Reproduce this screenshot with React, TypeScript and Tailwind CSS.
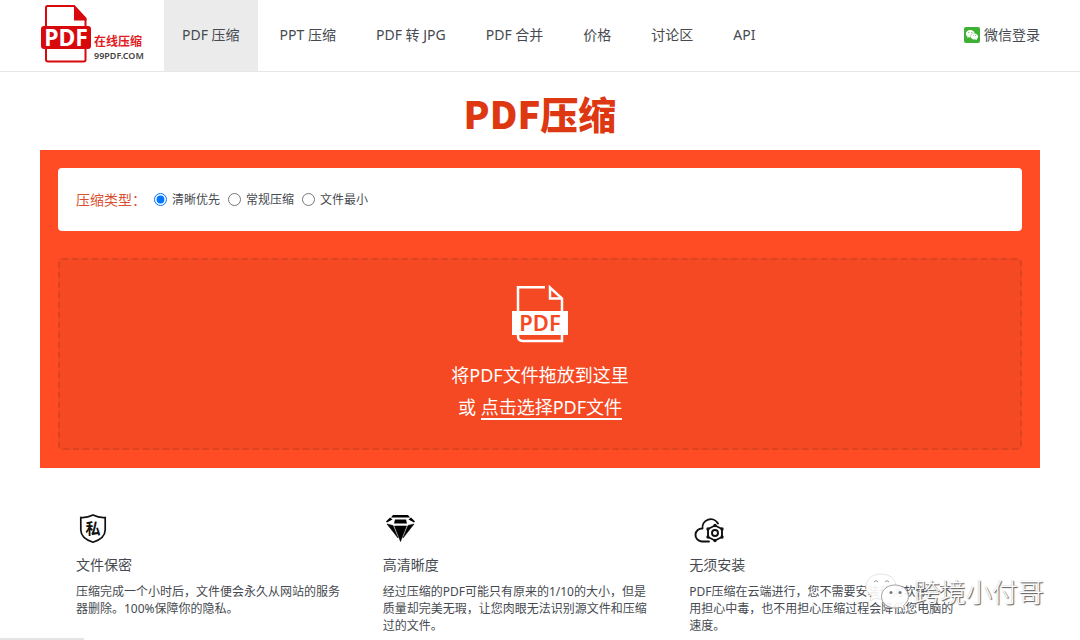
import { useState } from "react";
import { AiFillWechat } from "react-icons/ai";

const navItems = [
  "PDF 压缩",
  "PPT 压缩",
  "PDF 转 JPG",
  "PDF 合并",
  "价格",
  "讨论区",
  "API",
];

const compressTypes = ["清晰优先", "常规压缩", "文件最小"];

const features = [
  {
    title: "文件保密",
    text: "压缩完成一个小时后，文件便会永久从网站的服务器删除。100%保障你的隐私。",
    icon: <ShieldIcon />,
  },
  {
    title: "高清晰度",
    text: "经过压缩的PDF可能只有原来的1/10的大小，但是质量却完美无瑕，让您肉眼无法识别源文件和压缩过的文件。",
    icon: <DiamondIcon />,
  },
  {
    title: "无须安装",
    text: "PDF压缩在云端进行，您不需要安装任何软件，不用担心中毒，也不用担心压缩过程会降低您电脑的速度。",
    icon: <CloudIcon />,
  },
];

function LogoIcon() {
  return (
    <svg width="52" height="60" viewBox="0 0 52 60" aria-hidden="true">
      <path
        d="M6 22V3.500Q6 2 7.500 2H34L45.500 14.500V56Q45.500 57.500 43.500 57.500H8Q6 57.500 6 55.500V22Z"
        fill="#fff"
        stroke="#d8090d"
        strokeWidth="2"
      />
      <path d="M34 1L46.500 15V16.500H34Z" fill="#d8090d" />
      <rect x="1" y="22" width="50" height="23" rx="3" fill="#d8090d" />
      <text
        x="26"
        y="42"
        textAnchor="middle"
        fill="#fff"
        fontSize="23"
        fontWeight="700"
        fontFamily="Noto Sans, sans-serif"
      >
        PDF
      </text>
    </svg>
  );
}

function UploadIcon() {
  return (
    <svg width="58" height="58" viewBox="0 0 58 58" aria-hidden="true">
      <g fill="none" stroke="#fff" strokeWidth="2.500">
        <path d="M7 27V2.300H34" />
        <path d="M51 27V13.500L39 2.500V13.500H51" />
        <path d="M7 49V51Q7 56 12 56H51V49" />
      </g>
      <rect x="1" y="26" width="56" height="24" fill="#fff" />
      <text
        x="29"
        y="45.500"
        textAnchor="middle"
        fill="#f54923"
        fontSize="22"
        fontWeight="600"
        fontFamily="Noto Sans, sans-serif"
      >
        PDF
      </text>
    </svg>
  );
}

function ShieldIcon() {
  return (
    <svg width="32" height="32" viewBox="0 0 32 32" aria-hidden="true">
      <path
        d="M17 2Q23 5 29.200 4.500V17Q29 25.500 17 29.200Q5 25.500 4.800 17V4.500Q11 5 17 2Z"
        fill="none"
        stroke="#111"
        strokeWidth="1.700"
      />
      <text
        x="17"
        y="21"
        textAnchor="middle"
        fill="#111"
        fontSize="15"
        fontWeight="700"
        fontFamily="Noto Sans CJK SC, sans-serif"
      >
        私
      </text>
    </svg>
  );
}

function DiamondIcon() {
  return (
    <svg width="34" height="32" viewBox="0 0 34 32" aria-hidden="true">
      <path
        d="M10 2H25L27 4.500H8ZM7 4.500L9.500 6.500L4 9.500L3 8.500ZM28 4.500L25.500 6.500L31 9.500L32 8.500ZM12 6.500H23L24 10.500H11Z"
        fill="#000"
      />
      <path
        d="M4 11L10 12.500L15 25ZM31 11L25 12.500L20 25ZM11.500 13H23.500L17.500 28.500Z"
        fill="#000"
        stroke="#000"
        strokeWidth="0.600"
      />
    </svg>
  );
}

function CloudIcon() {
  return (
    <svg width="36" height="32" viewBox="0 0 36 32" aria-hidden="true">
      <g
        fill="none"
        stroke="#111"
        strokeWidth="1.900"
        strokeLinecap="round"
        strokeLinejoin="round"
      >
        <path d="M20 28.500H12.500A6.200 6.200 0 0 1 13.500 15.500A8.300 8.300 0 0 1 29 10.500" />
        <path d="M26 12.500L33 16V24L26 27.500L19 24V16Z" />
        <circle cx="26" cy="20" r="3" />
      </g>
      <g fill="#111">
        <circle cx="26" cy="12.500" r="1.700" />
        <circle cx="33" cy="16" r="1.700" />
        <circle cx="33" cy="24" r="1.700" />
        <circle cx="26" cy="27.500" r="1.700" />
        <circle cx="19" cy="24" r="1.700" />
        <circle cx="19" cy="16" r="1.700" />
      </g>
    </svg>
  );
}

function Watermark() {
  return (
    <div className="absolute right-9 bottom-7 flex items-center gap-1 pointer-events-none">
      <svg width="46" height="40" viewBox="0 0 46 40" aria-hidden="true">
        <path
          d="M17 2C8 2 2 7.500 2 14.500C2 18.500 4 21.500 7.500 24L6 29L11.500 26.200Q14 27 17 27C26 27 32 21.500 32 14.500S26 2 17 2Z"
          fill="#fff"
          fillOpacity="0.900"
          stroke="#ddd"
          strokeWidth="0.800"
        />
        <path
          d="M31 13C23 13 17.500 18 17.500 24.500S23 36 31 36Q33.500 36 36 35.200L41 38L39.600 33.500C42.500 31 44.500 28 44.500 24.500C44.500 18 39 13 31 13Z"
          fill="#fff"
          fillOpacity="0.900"
          stroke="#999"
          strokeWidth="0.900"
        />
        <path
          d="M10 10Q12 7 14 10M21 10Q23 7 25 10"
          fill="none"
          stroke="#999"
        />
        <circle cx="27" cy="20.500" r="1.500" fill="#777" />
        <circle cx="36" cy="20.500" r="1.500" fill="#777" />
      </svg>
      <span className="text-[26px] leading-10 font-light text-white [text-shadow:1px_1px_1px_#555,0_0_1px_#aaa]">
        跨境小付哥
      </span>
    </div>
  );
}

function Header() {
  return (
    <header className="border-b border-[#e6e6e6]">
      <div className="max-w-[1000px] mx-auto flex items-stretch h-[71px]">
        <a href="#" className="flex w-[124px] shrink-0 pt-1">
          <LogoIcon />
          <span className="flex flex-col pl-0.5 pt-[30px] whitespace-nowrap">
            <span className="text-[12px] leading-4 font-bold text-[#e01a1e]">
              在线压缩
            </span>
            <span className="text-[9px] leading-3 font-semibold text-[#444]">
              99PDF.COM
            </span>
          </span>
        </a>
        <nav className="flex gap-1">
          {navItems.map((item, index) => (
            <a
              key={item}
              href="#"
              className={
                "flex items-center px-[18px] pb-0.5 text-sm whitespace-nowrap " +
                (index === 0 ? "bg-[#ebebeb]" : "")
              }
            >
              {item}
            </a>
          ))}
        </nav>
        <a href="#" className="ml-auto flex items-center gap-1 pb-0.5 text-sm">
          <span className="flex items-center justify-center size-4 rounded-xs bg-[#3eb135] text-white">
            <AiFillWechat size={14} />
          </span>
          微信登录
        </a>
      </div>
    </header>
  );
}

export default function App() {
  const [type, setType] = useState(compressTypes[0]);

  return (
    <div className="relative min-h-screen overflow-hidden bg-white text-[#464a50] font-['Noto_Sans','Noto_Sans_CJK_SC',sans-serif]">
      <Header />
      <main className="max-w-[1000px] mx-auto">
        <h1 className="pt-4 pb-3 text-center text-[38px] leading-[50px] font-black text-[#de3812] font-['Noto_Sans_CJK_SC',sans-serif]">
          PDF压缩
        </h1>
        <section className="bg-[#ff4c24] p-[18px]">
          <div
            role="radiogroup"
            aria-labelledby="type-title"
            className="flex items-center rounded-sm bg-white h-[63px] px-[18px]"
          >
            <span id="type-title" className="text-sm text-[#d9502f] w-[78px]">
              压缩类型：
            </span>
            <div className="flex gap-2">
              {compressTypes.map((item) => (
                <label
                  key={item}
                  className="flex items-center gap-[5px] text-[12px]"
                >
                  <input
                    type="radio"
                    name="type"
                    className="size-[13px]"
                    checked={type === item}
                    onChange={() => setType(item)}
                  />
                  {item}
                </label>
              ))}
            </div>
          </div>
          <div className="mt-[27px] flex flex-col items-center rounded-sm border-2 border-dashed border-[#dc4320] bg-[#f54923] py-[25px] text-white text-[18px] leading-8">
            <UploadIcon />
            <p className="mt-4">将PDF文件拖放到这里</p>
            <p>
              或{" "}
              <button
                type="button"
                className="border-b-2 border-white leading-[22px] cursor-pointer"
              >
                点击选择PDF文件
              </button>
            </p>
          </div>
        </section>
        <section className="grid grid-cols-3 gap-9 pl-9 pr-20 pt-[45px]">
          {features.map((feature) => (
            <div key={feature.title}>
              {feature.icon}
              <h2 className="mt-2 text-sm leading-6">{feature.title}</h2>
              <p className="mt-1.5 text-[12px] leading-[17px]">
                {feature.text}
              </p>
            </div>
          ))}
        </section>
      </main>
      <Watermark />
      <div className="absolute left-0 bottom-0 w-[84px] h-0.5 bg-[#e4e4e4]" />
    </div>
  );
}
